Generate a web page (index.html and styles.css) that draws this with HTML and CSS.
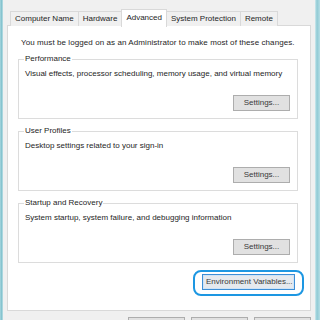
FILE: index.html
```html
<!DOCTYPE html>
<html>
<head>
<meta charset="utf-8">
<link rel="stylesheet" href="styles.css">
</head>
<body>
<div class="screen">
  <div class="edge edge-left"></div>
  <div class="window">
    <div class="tabs">
      <div class="tab">Computer Name</div>
      <div class="tab">Hardware</div>
      <div class="tab tab-active">Advanced</div>
      <div class="tab">System Protection</div>
      <div class="tab">Remote</div>
    </div>
    <div class="panel">
      <p class="note">You must be logged on as an Administrator to make most of these changes.</p>
      <fieldset class="group">
        <legend>Performance</legend>
        <p class="desc">Visual effects, processor scheduling, memory usage, and virtual memory</p>
        <div class="actions"><button class="btn">Settings...</button></div>
      </fieldset>
      <fieldset class="group">
        <legend>User Profiles</legend>
        <p class="desc">Desktop settings related to your sign-in</p>
        <div class="actions"><button class="btn">Settings...</button></div>
      </fieldset>
      <fieldset class="group">
        <legend>Startup and Recovery</legend>
        <p class="desc">System startup, system failure, and debugging information</p>
        <div class="actions"><button class="btn">Settings...</button></div>
      </fieldset>
      <div class="env-row">
        <span class="focus-ring"><button class="btn btn-focus">Environment Variables...</button></span>
      </div>
    </div>
    <div class="footer">
      <button class="btn btn-foot" aria-label="OK"></button>
      <button class="btn btn-foot" aria-label="Cancel"></button>
      <button class="btn btn-foot" aria-label="Apply"></button>
    </div>
  </div>
  <div class="edge edge-right"></div>
</div>
</body>
</html>
```

FILE: styles.css
```css
* { box-sizing: border-box; }
html, body { margin: 0; padding: 0; }
body {
  width: 320px;
  height: 320px;
  overflow: hidden;
  background: #f0f0f0;
  font-family: "Liberation Sans", Arial, sans-serif;
  font-size: 8px;
  line-height: 10px;
  color: #1e1e1e;
}
.screen {
  display: flex;
  height: 320px;
}
.edge { flex: none; height: 320px; }
.edge-left {
  width: 3px;
  background: linear-gradient(to right, #a8d6de, #7fc0cc 60%, #c9e6eb);
}
.edge-right {
  width: 5px;
  background: linear-gradient(to right, #cfe9ee, #8fcad4 40%, #b5dde4);
}
.window {
  width: 312px;
  flex: none;
  padding: 9px 4px 0 4px;
  background: #f0f0f0;
}
.tabs {
  display: flex;
  align-items: flex-end;
  padding-left: 3px;
  height: 17px;
  position: relative;
  z-index: 1;
}
.tab {
  height: 15px;
  padding: 2px 4px 0 4px;
  border: 1px solid #d9d9d9;
  border-bottom: none;
  margin-left: -1px;
  background: #f0f0f0;
  white-space: nowrap;
}
.tab:first-child { margin-left: 0; }
.tab-active {
  height: 18px;
  padding-top: 3px;
  background: #fff;
  margin-bottom: -1px;
}
.panel {
  height: 286px;
  margin-top: -1px;
  background: #fff;
  border: 1px solid #d9d9d9;
  padding: 12px 0 0 10px;
}
.note {
  margin: 0 0 6px 3px;
  white-space: nowrap;
  letter-spacing: 0.08px;
}
.group {
  width: 280px;
  margin: 0 0 7px 0;
  padding: 0 7px 7px 6px;
  border: 1px solid #dcdcdc;
  min-width: 0;
}
.group legend {
  padding: 0 1px;
  margin-left: -1px;
  line-height: 10px;
}
.desc {
  margin: 5px 0 0 0;
  white-space: nowrap;
}
.actions {
  display: flex;
  justify-content: flex-end;
  margin-top: 16px;
}
.btn {
  font-family: "Liberation Sans", Arial, sans-serif;
  font-size: 8px;
  line-height: 10px;
  height: 16px;
  padding: 0 6px;
  background: #e1e1e1;
  border: 1px solid #adadad;
  color: #3a3a3a;
  border-radius: 0;
  margin: 0;
  white-space: nowrap;
}
.actions .btn { width: 57px; }
.env-row {
  display: flex;
  justify-content: flex-end;
  margin-top: 0;
  padding-right: 6px;
}
.focus-ring {
  display: inline-block;
  border: 2px solid #1d97e2;
  border-radius: 8px;
  padding: 2px 7px 4px 7px;
}
.btn-focus {
  width: 93px;
  padding: 0 3px;
  border: 1px solid #3d8ed6;
  background: #e5e9ee;
  box-shadow: inset 0 0 0 1px #cfe3f6;
}
.footer {
  display: flex;
  justify-content: flex-end;
  gap: 6px;
  margin-top: 6px;
}
.btn-foot {
  width: 57px;
  height: 20px;
}
```
